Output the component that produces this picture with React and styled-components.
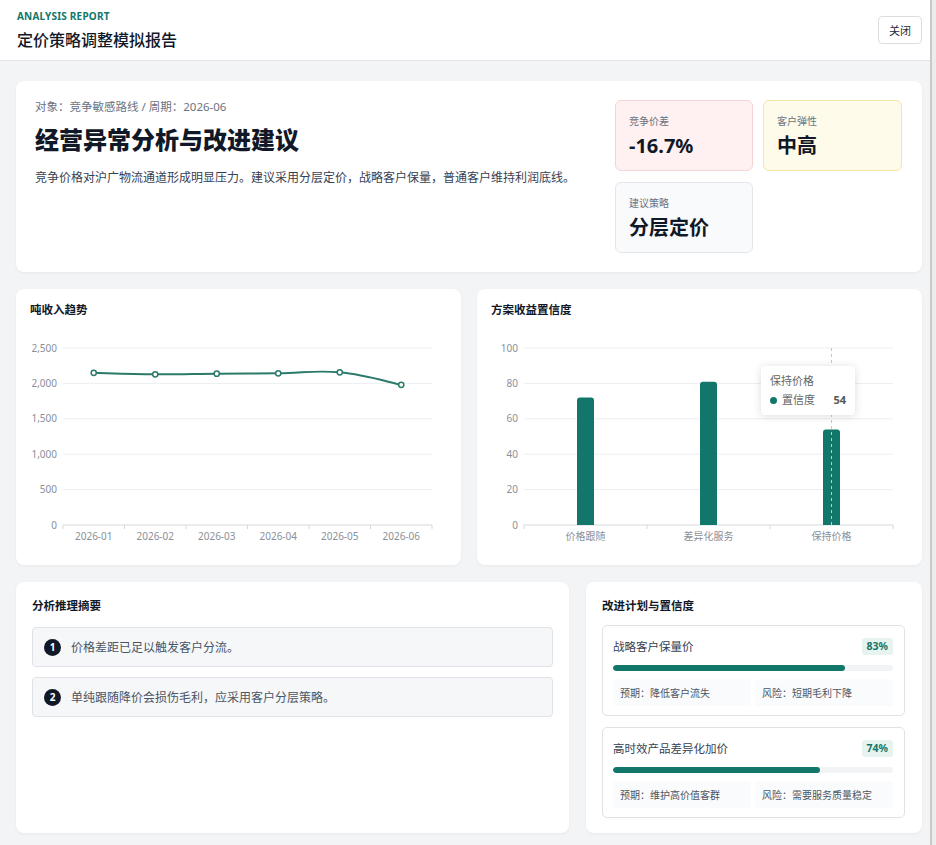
import React from 'react';
import styled, { createGlobalStyle } from 'styled-components';

const TEAL = '#12776a';

const GlobalStyle = createGlobalStyle`
  html, body {
    margin: 0;
    padding: 0;
    background: #f3f4f6;
  }
  body {
    font-family: "Noto Sans", "Noto Sans CJK SC", sans-serif;
    color: #111827;
  }
  * {
    box-sizing: border-box;
  }
`;

const Shell = styled.div`
  display: flex;
  min-height: 845px;
`;

const Main = styled.div`
  flex: 1;
  min-width: 0;
`;

const ScrollTrack = styled.div`
  width: 6px;
  background: #ececec;
  border-left: 2px solid #c9c9c9;
`;

const Header = styled.header`
  height: 61px;
  background: #ffffff;
  border-bottom: 1px solid #e2e4e8;
  display: flex;
  align-items: center;
  justify-content: space-between;
  padding: 0 8px 0 17px;
`;

const Eyebrow = styled.div`
  font-size: 10px;
  font-weight: 700;
  letter-spacing: 0.2px;
  color: ${TEAL};
  line-height: 12px;
`;

const PageTitle = styled.h1`
  margin: 8px 0 0;
  font-size: 16px;
  font-weight: 500;
  line-height: 20px;
  color: #111827;
`;

const CloseButton = styled.button`
  width: 44px;
  height: 28px;
  border: 1px solid #d9dce1;
  border-radius: 4px;
  background: #ffffff;
  font-family: inherit;
  font-size: 11px;
  color: #1f2937;
  padding: 0;
`;

const Body = styled.main`
  padding: 20px 8px 16px 16px;
  display: flex;
  flex-direction: column;
  gap: 17px;
`;

const Card = styled.section`
  background: #ffffff;
  border-radius: 8px;
  box-shadow: 0 1px 3px rgba(15, 23, 42, 0.05);
  padding: ${(p) => p.$pad || '16px'};
  position: relative;
`;

const HeroCard = styled(Card)`
  display: flex;
  justify-content: space-between;
  padding: 19px 20px 19px 19px;
`;

const Meta = styled.div`
  font-size: 11.5px;
  line-height: 14px;
  color: #6b7280;
`;

const Heading = styled.h2`
  margin: 10px 0 0;
  font-size: 24px;
  line-height: 32px;
  font-weight: 800;
  color: #111827;
`;

const Summary = styled.p`
  margin: 13px 0 0;
  font-size: 12px;
  line-height: 18px;
  color: #374151;
`;

const KpiGrid = styled.div`
  display: grid;
  grid-template-columns: 138px 139px;
  grid-auto-rows: 71px;
  column-gap: 10px;
  row-gap: 11px;
  align-self: flex-start;
`;

const tones = {
  red: { bg: '#fff1f1', border: '#f7d4d4' },
  yellow: { bg: '#fffbea', border: '#f6e6a6' },
  gray: { bg: '#f8fafc', border: '#e3e7ec' },
};

const Kpi = styled.div`
  background: ${(p) => tones[p.$tone].bg};
  border: 1px solid ${(p) => tones[p.$tone].border};
  border-radius: 6px;
  padding: 13px 13px 0;
`;

const KpiLabel = styled.div`
  font-size: 10px;
  line-height: 14px;
  color: #6b7280;
`;

const KpiValue = styled.div`
  margin-top: 4px;
  font-size: 20px;
  line-height: 28px;
  font-weight: 700;
  color: #111827;
`;

const Row = styled.div`
  display: grid;
  grid-template-columns: ${(p) => p.$cols};
  gap: ${(p) => p.$gap || '16px'};
`;

const CardTitle = styled.h3`
  margin: 0;
  font-size: 11.5px;
  line-height: 18px;
  font-weight: 700;
  color: #111827;
`;

const ChartSvg = styled.svg`
  display: block;
  width: 417px;
  height: 233px;
  margin-top: 2px;
`;

const Tooltip = styled.div`
  position: absolute;
  left: 284px;
  top: 77px;
  width: 94px;
  height: 49px;
  background: #ffffff;
  border-radius: 4px;
  box-shadow: 0 1px 8px rgba(0, 0, 0, 0.14);
  padding: 8px 9px 0 9px;
  font-size: 11px;
  color: #666666;
`;

const TipTitle = styled.div`
  line-height: 14px;
`;

const TipRow = styled.div`
  display: flex;
  align-items: center;
  margin-top: 5px;
  line-height: 14px;
`;

const TipDot = styled.span`
  width: 7px;
  height: 7px;
  border-radius: 50%;
  background: ${TEAL};
  margin-right: 5px;
`;

const TipValue = styled.span`
  margin-left: auto;
  font-weight: 700;
  color: #555555;
`;

const StepList = styled.ol`
  list-style: none;
  margin: 12px 0 0;
  padding: 0;
  display: flex;
  flex-direction: column;
  gap: 10px;
`;

const Step = styled.li`
  height: 40px;
  display: flex;
  align-items: center;
  gap: 10px;
  padding: 0 11px;
  background: #f6f7f9;
  border: 1px solid #dfe2e7;
  border-radius: 4px;
  font-size: 12px;
  color: #4b5563;
`;

const StepNo = styled.span`
  width: 17px;
  height: 17px;
  border-radius: 50%;
  background: #111827;
  color: #ffffff;
  font-size: 10px;
  font-weight: 700;
  display: flex;
  align-items: center;
  justify-content: center;
`;

const PlanList = styled.div`
  margin-top: 10px;
  display: flex;
  flex-direction: column;
  gap: 11px;
`;

const Plan = styled.div`
  border: 1px solid #dfe2e7;
  border-radius: 5px;
  padding: 11px 11px 9px 10px;
`;

const PlanHead = styled.div`
  display: flex;
  align-items: center;
  justify-content: space-between;
  height: 18px;
`;

const PlanName = styled.span`
  font-size: 11.5px;
  color: #374151;
`;

const Pill = styled.span`
  background: #e7f3f0;
  color: ${TEAL};
  font-size: 10.5px;
  font-weight: 700;
  line-height: 17px;
  padding: 0 5px;
  border-radius: 3px;
`;

const Track = styled.div`
  margin-top: 10px;
  height: 6px;
  border-radius: 3px;
  background: #f1f3f5;
  overflow: hidden;
`;

const Fill = styled.div`
  height: 100%;
  border-radius: 3px;
  background: ${TEAL};
`;

const PlanMeta = styled.div`
  margin-top: 8px;
  display: grid;
  grid-template-columns: 1fr 1fr;
  gap: 4px;
`;

const MetaCell = styled.div`
  background: #fafbfc;
  border-radius: 3px;
  height: 27px;
  display: flex;
  align-items: center;
  padding: 0 7px;
  font-size: 10px;
  color: #4b5563;
`;

const kpis = [
  { label: '竞争价差', value: '-16.7%', tone: 'red' },
  { label: '客户弹性', value: '中高', tone: 'yellow' },
  { label: '建议策略', value: '分层定价', tone: 'gray' },
];

const months = ['2026-01', '2026-02', '2026-03', '2026-04', '2026-05', '2026-06'];
const revenue = [2150, 2128, 2137, 2142, 2156, 1980];

const bars = [
  { name: '价格跟随', value: 72 },
  { name: '差异化服务', value: 81 },
  { name: '保持价格', value: 54 },
];

const steps = ['价格差距已足以触发客户分流。', '单纯跟随降价会损伤毛利，应采用客户分层策略。'];

const plans = [
  { name: '战略客户保量价', pct: 83, expect: '预期：降低客户流失', risk: '风险：短期毛利下降' },
  { name: '高时效产品差异化加价', pct: 74, expect: '预期：维护高价值客群', risk: '风险：需要服务质量稳定' },
];

// plot area inside the chart svg
const PL = 33;
const PR = 402;
const PT = 27;
const PB = 204;

function smoothPath(pts) {
  let d = `M${pts[0][0]},${pts[0][1]}`;
  for (let i = 0; i < pts.length - 1; i++) {
    const p0 = pts[i - 1] || pts[i];
    const p1 = pts[i];
    const p2 = pts[i + 1];
    const p3 = pts[i + 2] || p2;
    const t = 0.2;
    const c1x = p1[0] + (p2[0] - p0[0]) * t;
    const c1y = p1[1] + (p2[1] - p0[1]) * t;
    const c2x = p2[0] - (p3[0] - p1[0]) * t;
    const c2y = p2[1] - (p3[1] - p1[1]) * t;
    d += ` C${c1x},${c1y} ${c2x},${c2y} ${p2[0]},${p2[1]}`;
  }
  return d;
}

function Axes({ ticks, max, cats }) {
  const band = (PR - PL) / cats.length;
  return (
    <g fontFamily='"Noto Sans", "Noto Sans CJK SC", sans-serif' fontSize="10" fill="#8b9099">
      {ticks.map((t) => {
        const y = PB - (t / max) * (PB - PT);
        return (
          <g key={t}>
            {t !== 0 && <line x1={PL} x2={PR} y1={y} y2={y} stroke="#eceef1" strokeWidth="1" />}
            <text x={PL - 6} y={y + 3.5} textAnchor="end">
              {t.toLocaleString('en-US')}
            </text>
          </g>
        );
      })}
      <line x1={PL} x2={PR} y1={PB} y2={PB} stroke="#d5d8dd" strokeWidth="1" />
      {Array.from({ length: cats.length + 1 }).map((_, i) => (
        <line key={i} x1={PL + i * band} x2={PL + i * band} y1={PB} y2={PB + 4} stroke="#d5d8dd" />
      ))}
      {cats.map((c, i) => (
        <text key={c} x={PL + band * (i + 0.5)} y={PB + 15} textAnchor="middle">
          {c}
        </text>
      ))}
    </g>
  );
}

function TrendChart() {
  const max = 2500;
  const band = (PR - PL) / months.length;
  const pts = revenue.map((v, i) => [PL + band * (i + 0.5), PB - (v / max) * (PB - PT)]);
  return (
    <ChartSvg viewBox="0 0 417 233">
      <Axes ticks={[0, 500, 1000, 1500, 2000, 2500]} max={max} cats={months} />
      <path d={smoothPath(pts)} fill="none" stroke="#2b7a6b" strokeWidth="2" />
      {pts.map(([x, y], i) => (
        <circle key={i} cx={x} cy={y} r="2.6" fill="#ffffff" stroke="#2b7a6b" strokeWidth="1.5" />
      ))}
    </ChartSvg>
  );
}

function ConfidenceChart() {
  const max = 100;
  const band = (PR - PL) / bars.length;
  const hx = PL + band * 2.5;
  return (
    <ChartSvg viewBox="0 0 417 233">
      <Axes ticks={[0, 20, 40, 60, 80, 100]} max={max} cats={bars.map((b) => b.name)} />
      {bars.map((b, i) => {
        const cx = PL + band * (i + 0.5);
        const top = PB - (b.value / max) * (PB - PT);
        return (
          <path
            key={b.name}
            d={`M${cx - 8.5},${PB} V${top + 3} Q${cx - 8.5},${top} ${cx - 5.5},${top} H${cx + 5.5} Q${cx + 8.5},${top} ${cx + 8.5},${top + 3} V${PB} Z`}
            fill={TEAL}
          />
        );
      })}
      <line x1={hx} x2={hx} y1={PT} y2={PB} stroke="#c4c7cc" strokeDasharray="3 3" strokeWidth="1" />
    </ChartSvg>
  );
}

export default function App() {
  return (
    <>
      <GlobalStyle />
      <Shell>
        <Main>
          <Header>
            <div>
              <Eyebrow>ANALYSIS REPORT</Eyebrow>
              <PageTitle>定价策略调整模拟报告</PageTitle>
            </div>
            <CloseButton type="button">关闭</CloseButton>
          </Header>
          <Body>
            <HeroCard>
              <div>
                <Meta>对象：竞争敏感路线 / 周期：2026-06</Meta>
                <Heading>经营异常分析与改进建议</Heading>
                <Summary>竞争价格对沪广物流通道形成明显压力。建议采用分层定价，战略客户保量，普通客户维持利润底线。</Summary>
              </div>
              <KpiGrid>
                {kpis.map((k) => (
                  <Kpi key={k.label} $tone={k.tone}>
                    <KpiLabel>{k.label}</KpiLabel>
                    <KpiValue>{k.value}</KpiValue>
                  </Kpi>
                ))}
              </KpiGrid>
            </HeroCard>

            <Row $cols="1fr 1fr" $gap="16px">
              <Card $pad="12px 14px 11px 14px">
                <CardTitle>吨收入趋势</CardTitle>
                <TrendChart />
              </Card>
              <Card $pad="12px 14px 11px 14px">
                <CardTitle>方案收益置信度</CardTitle>
                <ConfidenceChart />
                <Tooltip>
                  <TipTitle>保持价格</TipTitle>
                  <TipRow>
                    <TipDot />
                    置信度
                    <TipValue>54</TipValue>
                  </TipRow>
                </Tooltip>
              </Card>
            </Row>

            <Row $cols="553px 1fr" $gap="17px">
              <Card $pad="15px 16px 15px">
                <CardTitle>分析推理摘要</CardTitle>
                <StepList>
                  {steps.map((s, i) => (
                    <Step key={i}>
                      <StepNo>{i + 1}</StepNo>
                      {s}
                    </Step>
                  ))}
                </StepList>
              </Card>
              <Card $pad="15px 17px 15px 16px">
                <CardTitle>改进计划与置信度</CardTitle>
                <PlanList>
                  {plans.map((p) => (
                    <Plan key={p.name}>
                      <PlanHead>
                        <PlanName>{p.name}</PlanName>
                        <Pill>{p.pct}%</Pill>
                      </PlanHead>
                      <Track>
                        <Fill style={{ width: `${p.pct}%` }} />
                      </Track>
                      <PlanMeta>
                        <MetaCell>{p.expect}</MetaCell>
                        <MetaCell>{p.risk}</MetaCell>
                      </PlanMeta>
                    </Plan>
                  ))}
                </PlanList>
              </Card>
            </Row>
          </Body>
        </Main>
        <ScrollTrack />
      </Shell>
    </>
  );
}
